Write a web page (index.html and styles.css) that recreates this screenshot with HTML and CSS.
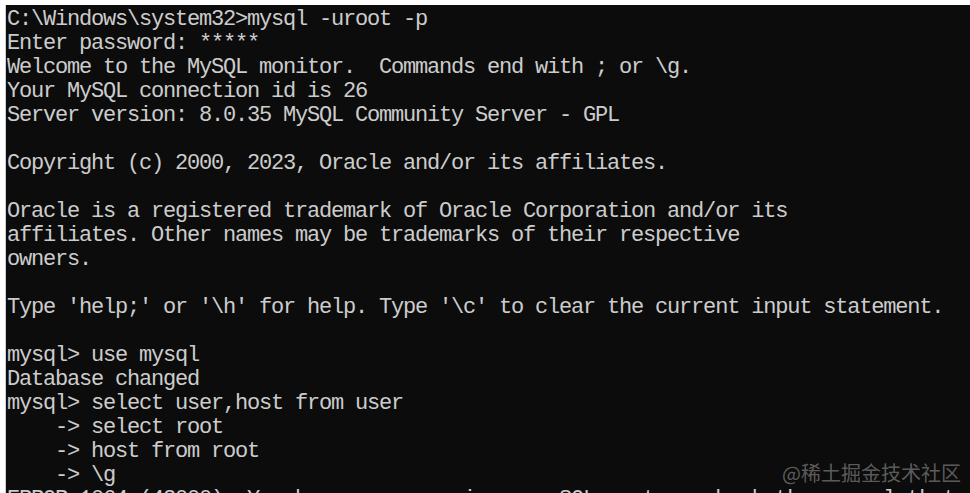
FILE: index.html
```html
<!DOCTYPE html>
<html>
<head>
<meta charset="utf-8">
<link rel="stylesheet" href="styles.css">
</head>
<body>
<div class="frame">
<div class="console">
<pre class="output">C:\Windows\system32&gt;mysql -uroot -p
Enter password: *****
Welcome to the MySQL monitor.  Commands end with ; or \g.
Your MySQL connection id is 26
Server version: 8.0.35 MySQL Community Server - GPL

Copyright (c) 2000, 2023, Oracle and/or its affiliates.

Oracle is a registered trademark of Oracle Corporation and/or its
affiliates. Other names may be trademarks of their respective
owners.

Type 'help;' or '\h' for help. Type '\c' to clear the current input statement.

mysql&gt; use mysql
Database changed
mysql&gt; select user,host from user
    -&gt; select root
    -&gt; host from root
    -&gt; \g
ERROR 1064 (42000): You have an error in your SQL syntax; check the manual that</pre>
<div class="watermark">@稀土掘金技术社区</div>
</div>
</div>
</body>
</html>
```
FILE: styles.css
```css
html, body {
  margin: 0;
  padding: 0;
  background: #ffffff;
  width: 970px;
  height: 493px;
  overflow: hidden;
}
.frame {
  padding: 5px 0 0 5px;
  height: 493px;
  box-sizing: border-box;
}
.console {
  position: relative;
  background: #0c0c0c;
  height: 100%;
  border-left: 1px solid #d0d0d0;
  overflow: hidden;
}
.output {
  margin: 0;
  padding: 3px 0 0 1px;
  color: #cccccc;
  font-family: "Liberation Mono", monospace;
  font-size: 22px;
  letter-spacing: -1.2px;
  line-height: 24px;
  white-space: pre;
}
.watermark {
  position: absolute;
  right: 9px;
  bottom: 8px;
  color: rgba(160, 160, 160, 0.55);
  font-family: "Noto Sans CJK SC", sans-serif;
  font-size: 20px;
  line-height: 24px;
}
```
